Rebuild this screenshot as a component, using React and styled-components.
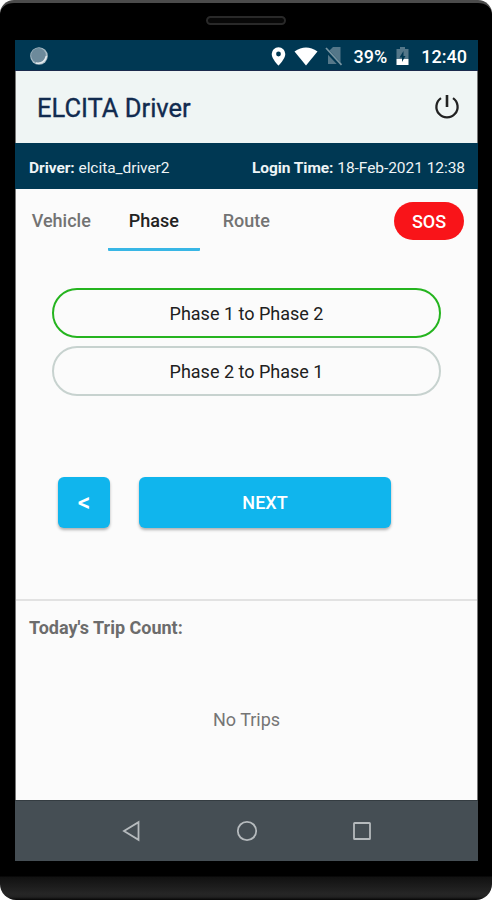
import React, { useState } from 'react'
import styled, { createGlobalStyle } from 'styled-components'

const GlobalStyle = createGlobalStyle`
  * {
    box-sizing: border-box;
  }
  body {
    margin: 0;
    background: #fff;
    font-family: Roboto, 'Liberation Sans', sans-serif;
  }
  button {
    font-family: inherit;
    border: none;
    padding: 0;
    cursor: pointer;
  }
`

const Phone = styled.div`
  width: 492px;
  height: 900px;
  padding: 0 14px 0 15px;
  background: linear-gradient(#000 0, #000 873px, #111 874px, #262626 891px, #222 894px, #050505 897px);
  border-top: 3px solid #4b4b4b;
  border-radius: 14px 14px 16px 16px;
  overflow: hidden;
`

const Earpiece = styled.div`
  width: 80px;
  height: 9px;
  margin: 13px auto 15px 191px;
  border: 2px solid #292929;
  border-radius: 5px;
  background: #080808;
`

const Screen = styled.div`
  display: flex;
  flex-direction: column;
  height: 821px;
  background: #fbfbfb;
  border-left: 1px solid #777;
  border-right: 1px solid #777;
`

const StatusBar = styled.div`
  display: flex;
  align-items: center;
  height: 31px;
  padding: 2px 10px 0 15px;
  background: #003853;
  border-bottom: 1px solid #1b2a4d;
  color: #fff;
  margin: 0 -1px;
`

const StatusText = styled.span`
  font-size: 18px;
  font-weight: 500;
  margin-left: ${(props) => props.$gap};
  white-space: nowrap;
`

const StatusIcon = styled.svg`
  flex: none;
  margin-left: ${(props) => props.$gap || '0'};
`

const AppBar = styled.header`
  display: flex;
  align-items: center;
  justify-content: space-between;
  height: 72px;
  padding: 2px 17px 0 21px;
  background: #eff5f4;
`

const Title = styled.h1`
  margin: 0;
  font-size: 25.5px;
  font-weight: 400;
  color: #112b4f;
  -webkit-text-stroke: 0.35px #112b4f;
  white-space: nowrap;
`

const PowerButton = styled.button`
  background: none;
  height: 28px;
`

const InfoBar = styled.div`
  display: flex;
  align-items: center;
  justify-content: space-between;
  height: 46px;
  padding: 3px 13px 0 14px;
  margin: 0 -1px;
  background: #003853;
  color: #eef4f6;
  font-size: 15.5px;
  letter-spacing: -0.05px;
  white-space: nowrap;

  strong {
    font-weight: 700;
  }
`

const Tabs = styled.nav`
  display: flex;
  height: 62px;
  margin-left: -1px;
  padding-right: 13px;
`

const Tab = styled.button`
  width: 92.5px;
  height: 62px;
  padding-top: 3px;
  background: none;
  border-bottom: 3px solid ${(props) => (props.$active ? '#38b6e5' : 'transparent')};
  border-radius: 1px;
  color: ${(props) => (props.$active ? '#222' : '#737373')};
  font-size: 18px;
  font-weight: 500;
`

const Sos = styled.button`
  width: 70px;
  height: 38px;
  margin: 13px 0 0 auto;
  border-radius: 19px;
  background: #f91419;
  color: #fff;
  font-size: 18px;
  font-weight: 500;
`

const Options = styled.div`
  display: flex;
  flex-direction: column;
  gap: 8px;
  padding: 37px 36px 0;
`

const Option = styled.button`
  height: 50px;
  border: 2px solid ${(props) => (props.$selected ? '#25b41f' : '#c7d2cf')};
  border-radius: 25px;
  background: #fbfbfb;
  color: #202020;
  font-size: 18px;
`

const Actions = styled.div`
  display: flex;
  gap: 29px;
  padding: 81px 0 0 42px;
`

const ActionButton = styled.button`
  width: ${(props) => props.$width};
  height: 51px;
  border-radius: 6px;
  background: #10b5ed;
  color: #fff;
  font-size: ${(props) => props.$size || '18px'};
  font-weight: 500;
  box-shadow: 0 2px 3px rgba(0, 0, 0, 0.3);
`

const Trips = styled.section`
  display: flex;
  flex-direction: column;
  flex: 1;
  margin-top: 71px;
  border-top: 2px solid #e2e2e2;
`

const TripsTitle = styled.h2`
  margin: 16px 0 0 13px;
  font-size: 18px;
  line-height: 21px;
  font-weight: 700;
  color: #6c6c6c;
`

const NoTrips = styled.p`
  margin: 71px 0 0;
  font-size: 18px;
  line-height: 22px;
  text-align: center;
  color: #757575;
`

const NavBar = styled.footer`
  display: flex;
  align-items: center;
  justify-content: center;
  gap: 91px;
  height: 61px;
  padding-bottom: 1px;
  margin: 0 -1px;
  background: #454e54;
  border-top: 1px solid #343c41;
`

const tabs = ['Vehicle', 'Phase', 'Route']
const phases = ['Phase 1 to Phase 2', 'Phase 2 to Phase 1']

const PowerIcon = () => (
  <svg width="26" height="26" viewBox="0 0 26 26" fill="none" stroke="#222" strokeWidth="2.3">
    <path d="M13 1V13" strokeWidth="2.6" />
    <path d="M7 4.1A10.6 10.6 0 1 0 19 4.1" />
  </svg>
)

const StatusIcons = () => (
  <>
    <StatusIcon width="18" height="18" viewBox="0 0 18 18">
      <circle cx="9" cy="9" r="8.8" fill="#a9bcc6" />
      <circle cx="8.5" cy="8.5" r="7.4" fill="#6d8a9b" />
      <path d="M6 16Q14 17.500 16.500 9" fill="none" stroke="#e3eaed" strokeWidth="1.6" />
    </StatusIcon>
    <StatusIcon $gap="222.5px" width="15" height="19" viewBox="0 0 15 19">
      <path
        d="M7.5 .3A6.8 6.8 0 0 0 .7 7.1C.7 12 7.5 18.7 7.5 18.7S14.3 12 14.3 7.1A6.8 6.8 0 0 0 7.5 .3ZM7.5 4.6A2.4 2.4 0 1 1 7.5 9.4A2.4 2.4 0 1 1 7.5 4.6Z"
        fill="#fff"
        fillRule="evenodd"
      />
    </StatusIcon>
    <StatusIcon $gap="8px" width="24" height="19" viewBox="0 0 24 19">
      <path d="M.5 4.5Q12 -3.5 23.5 4.5L12 18.5Z" fill="#fff" />
    </StatusIcon>
    <StatusIcon $gap="7px" width="18" height="20" viewBox="0 0 18 20">
      <path d="M8 1H15.5V18H3V6Z" fill="#547789" />
      <path d="M0 2.5L15.8 19.5" stroke="#003853" strokeWidth="4" />
      <path d="M1 2L16.5 18.8" stroke="#7895a2" strokeWidth="1.7" />
    </StatusIcon>
    <StatusText $gap="11px">39%</StatusText>
    <StatusIcon $gap="8.5px" width="13" height="20" viewBox="0 0 13 20">
      <path d="M4 1H9V3H12.5V13H.5V3H4Z" fill="#547789" />
      <path d="M.5 13H12.5V19H.5Z" fill="#fff" />
      <path d="M7.5 5L3.5 11.5H6V16L9.5 10H7.5Z" fill="#003853" />
    </StatusIcon>
    <StatusText $gap="12.5px">12:40</StatusText>
  </>
)

const App = () => {
  const [activeTab, setActiveTab] = useState('Phase')
  const [phase, setPhase] = useState(phases[0])

  return (
    <>
      <GlobalStyle />
      <Phone>
        <Earpiece />
        <Screen>
          <StatusBar>
            <StatusIcons />
          </StatusBar>
          <AppBar>
            <Title>ELCITA Driver</Title>
            <PowerButton aria-label="Logout">
              <PowerIcon />
            </PowerButton>
          </AppBar>
          <InfoBar>
            <span><strong>Driver:</strong> elcita_driver2</span>
            <span><strong>Login Time:</strong> 18-Feb-2021 12:38</span>
          </InfoBar>
          <Tabs>
            {tabs.map((tab) => (
              <Tab key={tab} $active={tab === activeTab} onClick={() => setActiveTab(tab)}>
                {tab}
              </Tab>
            ))}
            <Sos>SOS</Sos>
          </Tabs>
          <Options>
            {phases.map((item) => (
              <Option key={item} $selected={item === phase} onClick={() => setPhase(item)}>
                {item}
              </Option>
            ))}
          </Options>
          <Actions>
            <ActionButton $width="52px" $size="25px">&lt;</ActionButton>
            <ActionButton $width="252px">NEXT</ActionButton>
          </Actions>
          <Trips>
            <TripsTitle>Today's Trip Count:</TripsTitle>
            <NoTrips>No Trips</NoTrips>
          </Trips>
          <NavBar>
            <svg width="24" height="24" viewBox="0 0 24 24" fill="none" stroke="#b5babd" strokeWidth="1.8">
              <path d="M18.5 3.2V20.8L4 12Z" />
            </svg>
            <svg width="24" height="24" viewBox="0 0 24 24" fill="none" stroke="#b5babd" strokeWidth="1.8">
              <circle cx="12" cy="12" r="9.2" />
            </svg>
            <svg width="24" height="24" viewBox="0 0 24 24" fill="none" stroke="#b5babd" strokeWidth="1.8">
              <rect x="4" y="4" width="16" height="16" rx="0.6" />
            </svg>
          </NavBar>
        </Screen>
      </Phone>
    </>
  )
}

export default App
